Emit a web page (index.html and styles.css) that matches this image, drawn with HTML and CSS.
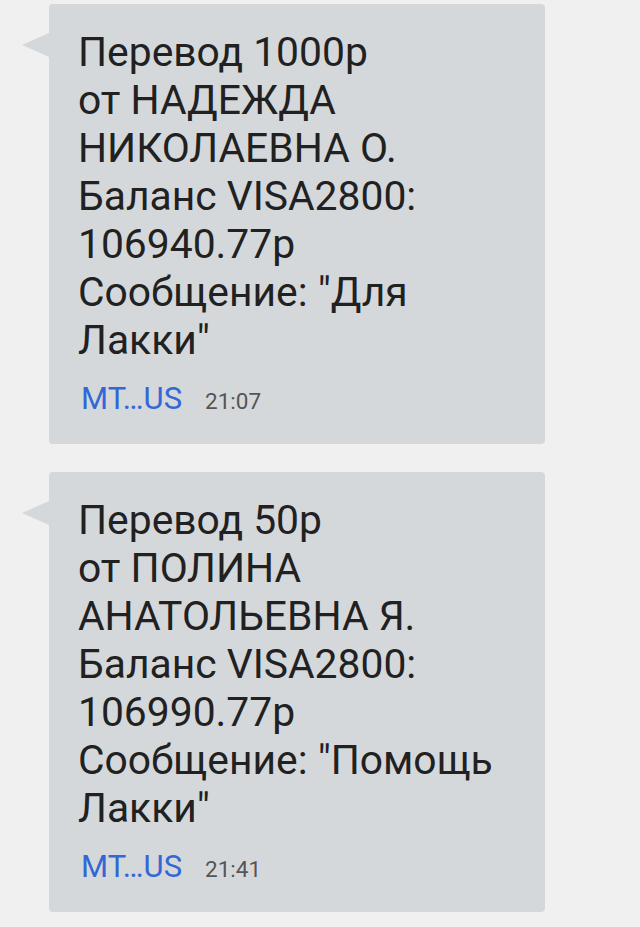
FILE: index.html
```html
<!DOCTYPE html>
<html>
<head>
    <title>Сообщения</title>
    <meta name="viewport" content="width=device-width, initial-scale=1.0">
    <link rel="stylesheet" href="styles.css">
</head>
<body>
    <div class="thread">
        <div class="bubble">
            <p class="text">Перевод 1000р<br>от НАДЕЖДА<br>НИКОЛАЕВНА О.<br>Баланс VISA2800:<br>106940.77р<br>Сообщение: "Для<br>Лакки"</p>
            <div class="meta">
                <span class="sender">MT…US</span>
                <span class="time">21:07</span>
            </div>
        </div>
        <div class="bubble">
            <p class="text">Перевод 50р<br>от ПОЛИНА<br>АНАТОЛЬЕВНА Я.<br>Баланс VISA2800:<br>106990.77р<br>Сообщение: "Помощь<br>Лакки"</p>
            <div class="meta">
                <span class="sender">MT…US</span>
                <span class="time">21:41</span>
            </div>
        </div>
    </div>
</body>
</html>
```

FILE: styles.css
```css
body {
    margin: 0;
    background: #f0f0f0;
    font-family: Roboto, "Noto Sans", sans-serif;
}
.thread {
    display: flex;
    flex-direction: column;
    gap: 28px;
    padding: 4px 0 0 49px;
}
.bubble {
    position: relative;
    width: 496px;
    box-sizing: border-box;
    padding: 24px 20px 27px 29px;
    background: #d5d8db;
    border-radius: 4px;
}
.bubble::before {
    content: "";
    position: absolute;
    left: -27px;
    top: 29px;
    border-style: solid;
    border-width: 12px 27px 12px 0;
    border-color: transparent #d5d8db transparent transparent;
}
.text {
    margin: 0;
    font-size: 40.8px;
    line-height: 48px;
    color: #212121;
}
.meta {
    display: flex;
    align-items: baseline;
    gap: 23px;
    margin-top: 16px;
    padding-left: 3px;
}
.sender {
    font-size: 31px;
    color: #3367d6;
}
.time {
    font-size: 22.5px;
    color: #555555;
}
```
